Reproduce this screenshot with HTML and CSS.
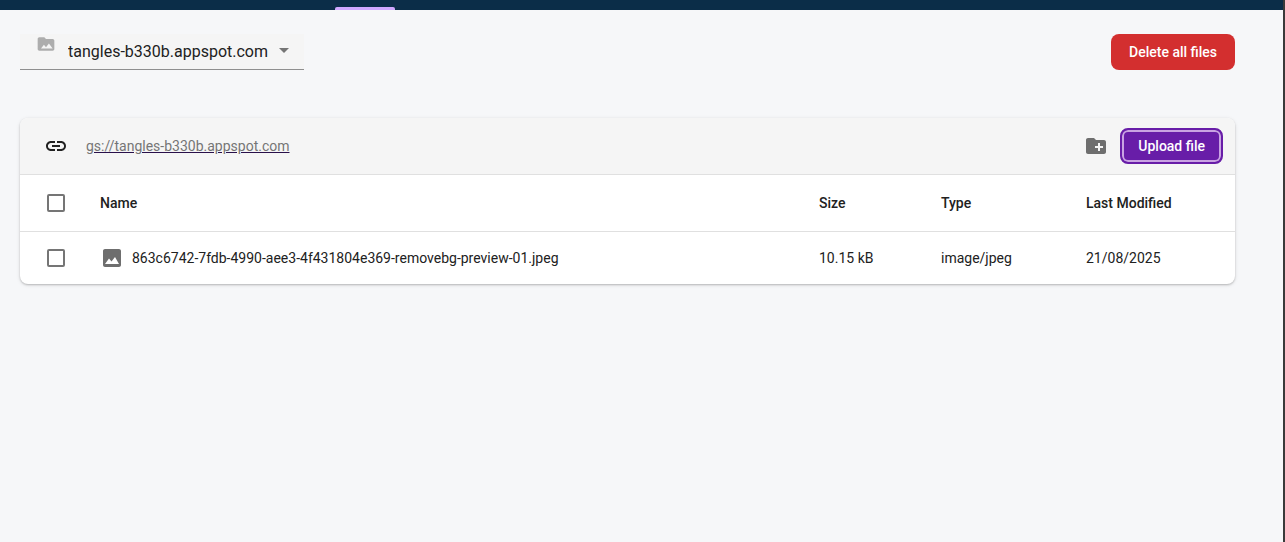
FILE: index.html
```html
<!DOCTYPE html>
<html lang="en">
<head>
<meta charset="utf-8">
<title>Storage</title>
<link rel="stylesheet" href="styles.css">
</head>
<body>
<header class="topbar"><span class="tab-indicator"></span></header>
<main class="content">
  <div class="actions">
    <div class="bucket">
      <svg class="bucket-icon" viewBox="0 0 24 24" aria-hidden="true"><path fill-rule="evenodd" d="M20 6h-8l-2-2H4c-1.100 0-2 .9-2 2v12c0 1.100.9 2 2 2h16c1.100 0 2-.9 2-2V8c0-1.100-.9-2-2-2zM6 17.500l3.500-4.500 2.500 3 3.500-4.500 4.500 6z"/></svg>
      <select class="bucket-select" aria-label="Bucket"><option>tangles-b330b.appspot.com</option></select>
      <svg class="bucket-arrow" viewBox="0 0 10 5" aria-hidden="true"><path d="M0 0h10L5 5z"/></svg>
    </div>
    <button class="button button-danger" type="button">Delete all files</button>
  </div>
  <section class="card">
    <div class="toolbar">
      <svg class="icon icon-dark" viewBox="0 0 24 24" aria-hidden="true"><path d="M3.900 12c0-1.710 1.390-3.100 3.100-3.100h4V7H7c-2.760 0-5 2.240-5 5s2.240 5 5 5h4v-1.900H7c-1.710 0-3.100-1.390-3.100-3.100zM8 13h8v-2H8v2zm9-6h-4v1.900h4c1.710 0 3.100 1.390 3.100 3.100s-1.390 3.100-3.100 3.100h-4V17h4c2.760 0 5-2.240 5-5s-2.240-5-5-5z"/></svg>
      <a class="path" href="#">gs://tangles-b330b.appspot.com</a>
      <button class="icon-button" type="button" aria-label="Create folder"><svg class="icon" viewBox="0 0 24 24" aria-hidden="true"><path d="M20 6h-8l-2-2H4c-1.110 0-1.990.890-1.990 2L2 18c0 1.110.890 2 2 2h16c1.110 0 2-.890 2-2V8c0-1.110-.890-2-2-2zm-1 8h-3v3h-2v-3h-3v-2h3V9h2v3h3v2z"/></svg></button>
      <button class="button button-primary" type="button">Upload file</button>
    </div>
    <table class="files">
      <thead>
        <tr>
          <th class="col-check"><input class="check" type="checkbox" aria-label="Select all files"></th>
          <th>Name</th>
          <th class="col-size">Size</th>
          <th class="col-type">Type</th>
          <th class="col-modified">Last Modified</th>
        </tr>
      </thead>
      <tbody>
        <tr>
          <td><input class="check" type="checkbox" aria-label="Select file"></td>
          <td><div class="file"><svg class="icon" viewBox="0 0 24 24" aria-hidden="true"><path fill-rule="evenodd" d="M5 3h14c1.100 0 2 .9 2 2v14c0 1.100-.9 2-2 2H5c-1.100 0-2-.9-2-2V5c0-1.100.9-2 2-2zM5 18l4-5.500 2.500 3 3.500-4.500 4 7z"/></svg><span>863c6742-7fdb-4990-aee3-4f431804e369-removebg-preview-01.jpeg</span></div></td>
          <td>10.15 kB</td>
          <td>image/jpeg</td>
          <td>21/08/2025</td>
        </tr>
      </tbody>
    </table>
  </section>
</main>
</body>
</html>
```
FILE: styles.css
```css
* {
  box-sizing: border-box;
}

body {
  margin: 0;
  min-height: 100vh;
  border-right: 2px solid #3a3a3a;
  background: #f6f7f9;
  color: #212121;
  font: 14px/20px Roboto, sans-serif;
}

.topbar {
  display: flex;
  align-items: flex-end;
  height: 10px;
  padding-left: 335px;
  background: #0b2d48;
}

.tab-indicator {
  width: 60px;
  height: 3px;
  border-radius: 2px 2px 0 0;
  background: #d0a8ff;
}

.content {
  padding: 24px 48px 24px 20px;
}

.actions {
  display: flex;
  justify-content: space-between;
  align-items: flex-start;
  margin-bottom: 48px;
}

.bucket {
  position: relative;
  display: flex;
  padding: 0 8px 0 16px;
  height: 36px;
  border-bottom: 1px solid #8f8f8f;
  background: #f5f5f5;
}

.bucket-icon {
  width: 20px;
  height: 20px;
  margin-right: 12px;
  fill: #adadad;
}

.bucket-select {
  appearance: none;
  height: 36px;
  padding: 0 28px 0 0;
  border: 0;
  background: none;
  color: #212121;
  font: 16px/24px Roboto, sans-serif;
}

.bucket-arrow {
  position: absolute;
  top: 14px;
  right: 15px;
  width: 10px;
  height: 5px;
  fill: #757575;
  pointer-events: none;
}

.button {
  height: 36px;
  padding: 0 18px;
  border: 0;
  border-radius: 8px;
  color: #fff;
  font: 500 14px/20px Roboto, sans-serif;
  white-space: nowrap;
}

.button-danger {
  background: #d32f2f;
}

.button-primary {
  border: 2px solid #681da8;
  padding: 0 16px;
  background: #681da8;
  box-shadow: inset 0 0 0 2px #c9a3e2;
}

.card {
  overflow: hidden;
  border-radius: 8px;
  background: #fff;
  box-shadow: 0 1px 2px rgba(0, 0, 0, .2), 0 1px 4px rgba(0, 0, 0, .1);
}

.toolbar {
  display: flex;
  align-items: center;
  height: 57px;
  padding: 0 12px 0 24px;
  border-bottom: 1px solid #e0e0e0;
  background: #f5f5f5;
}

.icon {
  display: block;
  flex: none;
  width: 24px;
  height: 24px;
  fill: #6e6e6e;
}

.icon-dark {
  fill: #212121;
}

.path {
  margin: 0 auto 0 18px;
  color: #757575;
  text-decoration-color: #29104a;
}

.icon-button {
  margin-right: 12px;
  padding: 0;
  border: 0;
  background: none;
}

.files {
  width: 100%;
  border-collapse: collapse;
  table-layout: fixed;
}

.files th,
.files td {
  padding: 0;
  text-align: left;
  vertical-align: middle;
}

.files th {
  height: 56px;
  border-bottom: 1px solid #e0e0e0;
  font-weight: 500;
}

.files td {
  height: 53px;
}

.col-check {
  width: 80px;
}

.col-size {
  width: 122px;
}

.col-type {
  width: 145px;
}

.col-modified {
  width: 149px;
}

.check {
  appearance: none;
  display: block;
  width: 18px;
  height: 18px;
  margin: 0 0 0 27px;
  border: 2px solid #757575;
  border-radius: 2px;
  background: #fff;
}

.file {
  display: flex;
  align-items: center;
  gap: 8px;
}
```
